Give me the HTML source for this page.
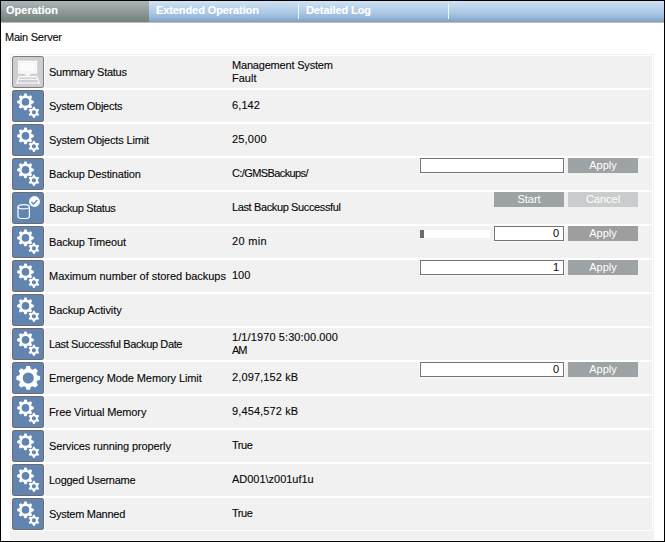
<!DOCTYPE html><html><head><meta charset="utf-8"><style>
*{margin:0;padding:0;box-sizing:border-box}
html,body{width:665px;height:542px;overflow:hidden;background:#fff}
body{position:relative;font-family:"Liberation Sans",sans-serif;font-size:11px;color:#050505}
.a{position:absolute}
.t{position:absolute;white-space:nowrap;line-height:12px;-webkit-text-stroke:0.1px currentColor}
.row{position:absolute;left:12px;width:640px;height:32px;background:#f1f1f1}
.ic{position:absolute;left:12px;width:32px;height:32px}
.ic svg{display:block}
.gap{position:absolute;left:44px;width:1px;height:32px;background:#fbfbfb}
.inp{position:absolute;background:#fff;border:1px solid #747474;height:15px;box-shadow:0 0 0 1px #fafafa}
.btn{position:absolute;height:15px;background:#9da2a4;color:#fff;text-align:center;line-height:15px;font-size:11px}
.num{position:absolute;right:4px;top:0px;line-height:12px}
</style></head><body>
<div class="a" style="left:0;top:0;width:665px;height:542px;border:1px solid #000;z-index:10"></div>
<div class="a" style="left:1px;top:1px;width:663px;height:21px;background:linear-gradient(#d3e5f6 0px,#c5dbef 3px,#aac7e4 12px,#8fb1d3 18px,#7aa0c6 21px)"></div>
<div class="a" style="left:1px;top:1px;width:148px;height:21px;background:linear-gradient(#abb6b8 0px,#a0a9aa 5px,#8c9696 12px,#7a8785 18px,#738180 21px)"></div>
<div class="a" style="left:1px;top:22px;width:663px;height:1px;background:#c4bdb6"></div>
<div class="a" style="left:298px;top:4px;width:1px;height:15px;background:#eef4fb"></div>
<div class="a" style="left:448px;top:4px;width:1px;height:15px;background:#eef4fb"></div>
<div class="t" style="left:6px;top:4px;letter-spacing:0.004px;font-weight:bold;color:#fff;">Operation</div>
<div class="t" style="left:156px;top:4px;letter-spacing:-0.092px;font-weight:bold;color:#fff;">Extended Operation</div>
<div class="t" style="left:306px;top:4px;letter-spacing:-0.094px;font-weight:bold;color:#fff;">Detailed Log</div>
<div class="t" style="left:5px;top:31px;letter-spacing:-0.231px;">Main Server</div>
<div class="a" style="left:10px;top:54px;width:644px;height:478px;border:1px solid #f2f2f2"></div>
<div class="a" style="left:10px;top:531px;width:644px;height:9px;background:#f1f1f1"></div>
<div class="row" style="top:56px"></div>
<div class="gap" style="top:56px"></div>
<div class="ic" style="top:56px"><svg width="32" height="32" viewBox="0 0 32 32"><rect x="0.5" y="0.5" width="31" height="31" rx="1.8" fill="#cfcdd1" stroke="#7d7c7e"/><rect x="6.6" y="5.3" width="18" height="11.8" fill="#fcfcfd" stroke="#fff" stroke-width="1.1"/><rect x="7.7" y="6.5" width="15.8" height="9.5" fill="none" stroke="#e2e1e4" stroke-width="0.5"/><rect x="13.1" y="18" width="4.9" height="1.4" fill="#fff"/><path d="M7.1,20.6H24.7L27.4,27H4.8Z" fill="none" stroke="#fff" stroke-width="1.1"/><path d="M6.1,23.3H25.9" stroke="#fff" stroke-width="0.9"/></svg></div>
<div class="t" style="left:49px;top:66px;letter-spacing:-0.257px;">Summary Status</div>
<div class="t" style="left:232px;top:59px;letter-spacing:-0.188px;">Management System</div>
<div class="t" style="left:232px;top:72px;letter-spacing:0.000px;">Fault</div>
<div class="row" style="top:90px"></div>
<div class="gap" style="top:90px"></div>
<div class="ic" style="top:90px"><svg width="32" height="32" viewBox="0 0 32 32"><rect x="0.5" y="0.5" width="31" height="31" rx="1.8" fill="#6184b1" stroke="#6e6a69"/><path fill="#fff" fill-rule="evenodd" d="M11.44,6.05L12.50,3.56L14.50,3.56L15.56,6.05A6.2,6.2 0 0 1 16.18,6.31L18.69,5.30L20.10,6.71L19.09,9.22A6.2,6.2 0 0 1 19.35,9.84L21.84,10.90L21.84,12.90L19.35,13.96A6.2,6.2 0 0 1 19.09,14.58L20.10,17.09L18.69,18.50L16.18,17.49A6.2,6.2 0 0 1 15.56,17.75L14.50,20.24L12.50,20.24L11.44,17.75A6.2,6.2 0 0 1 10.82,17.49L8.31,18.50L6.90,17.09L7.91,14.58A6.2,6.2 0 0 1 7.65,13.96L5.16,12.90L5.16,10.90L7.65,9.84A6.2,6.2 0 0 1 7.91,9.22L6.90,6.71L8.31,5.30L10.82,6.31A6.2,6.2 0 0 1 11.44,6.05ZM17.30,11.90A3.8,3.8 0 1 0 9.70,11.90A3.8,3.8 0 1 0 17.30,11.90Z"/><path fill="#fff" fill-rule="evenodd" d="M20.08,18.97L21.30,16.63L22.50,16.63L23.72,18.97A3.8,3.8 0 0 1 23.88,19.05L26.51,18.95L27.11,19.98L25.70,22.21A3.8,3.8 0 0 1 25.70,22.39L27.11,24.62L26.51,25.65L23.88,25.55A3.8,3.8 0 0 1 23.72,25.63L22.50,27.97L21.30,27.97L20.08,25.63A3.8,3.8 0 0 1 19.92,25.55L17.29,25.65L16.69,24.62L18.10,22.39A3.8,3.8 0 0 1 18.10,22.21L16.69,19.98L17.29,18.95L19.92,19.05A3.8,3.8 0 0 1 20.08,18.97ZM24.00,22.30A2.1,2.1 0 1 0 19.80,22.30A2.1,2.1 0 1 0 24.00,22.30Z"/></svg></div>
<div class="t" style="left:49px;top:100px;letter-spacing:-0.274px;">System Objects</div>
<div class="t" style="left:232px;top:99px;letter-spacing:0.109px;">6,142</div>
<div class="row" style="top:124px"></div>
<div class="gap" style="top:124px"></div>
<div class="ic" style="top:124px"><svg width="32" height="32" viewBox="0 0 32 32"><rect x="0.5" y="0.5" width="31" height="31" rx="1.8" fill="#6184b1" stroke="#6e6a69"/><path fill="#fff" fill-rule="evenodd" d="M11.44,6.05L12.50,3.56L14.50,3.56L15.56,6.05A6.2,6.2 0 0 1 16.18,6.31L18.69,5.30L20.10,6.71L19.09,9.22A6.2,6.2 0 0 1 19.35,9.84L21.84,10.90L21.84,12.90L19.35,13.96A6.2,6.2 0 0 1 19.09,14.58L20.10,17.09L18.69,18.50L16.18,17.49A6.2,6.2 0 0 1 15.56,17.75L14.50,20.24L12.50,20.24L11.44,17.75A6.2,6.2 0 0 1 10.82,17.49L8.31,18.50L6.90,17.09L7.91,14.58A6.2,6.2 0 0 1 7.65,13.96L5.16,12.90L5.16,10.90L7.65,9.84A6.2,6.2 0 0 1 7.91,9.22L6.90,6.71L8.31,5.30L10.82,6.31A6.2,6.2 0 0 1 11.44,6.05ZM17.30,11.90A3.8,3.8 0 1 0 9.70,11.90A3.8,3.8 0 1 0 17.30,11.90Z"/><path fill="#fff" fill-rule="evenodd" d="M20.08,18.97L21.30,16.63L22.50,16.63L23.72,18.97A3.8,3.8 0 0 1 23.88,19.05L26.51,18.95L27.11,19.98L25.70,22.21A3.8,3.8 0 0 1 25.70,22.39L27.11,24.62L26.51,25.65L23.88,25.55A3.8,3.8 0 0 1 23.72,25.63L22.50,27.97L21.30,27.97L20.08,25.63A3.8,3.8 0 0 1 19.92,25.55L17.29,25.65L16.69,24.62L18.10,22.39A3.8,3.8 0 0 1 18.10,22.21L16.69,19.98L17.29,18.95L19.92,19.05A3.8,3.8 0 0 1 20.08,18.97ZM24.00,22.30A2.1,2.1 0 1 0 19.80,22.30A2.1,2.1 0 1 0 24.00,22.30Z"/></svg></div>
<div class="t" style="left:49px;top:134px;letter-spacing:-0.176px;">System Objects Limit</div>
<div class="t" style="left:232px;top:133px;letter-spacing:0.183px;">25,000</div>
<div class="row" style="top:158px"></div>
<div class="gap" style="top:158px"></div>
<div class="ic" style="top:158px"><svg width="32" height="32" viewBox="0 0 32 32"><rect x="0.5" y="0.5" width="31" height="31" rx="1.8" fill="#6184b1" stroke="#6e6a69"/><path fill="#fff" fill-rule="evenodd" d="M11.44,6.05L12.50,3.56L14.50,3.56L15.56,6.05A6.2,6.2 0 0 1 16.18,6.31L18.69,5.30L20.10,6.71L19.09,9.22A6.2,6.2 0 0 1 19.35,9.84L21.84,10.90L21.84,12.90L19.35,13.96A6.2,6.2 0 0 1 19.09,14.58L20.10,17.09L18.69,18.50L16.18,17.49A6.2,6.2 0 0 1 15.56,17.75L14.50,20.24L12.50,20.24L11.44,17.75A6.2,6.2 0 0 1 10.82,17.49L8.31,18.50L6.90,17.09L7.91,14.58A6.2,6.2 0 0 1 7.65,13.96L5.16,12.90L5.16,10.90L7.65,9.84A6.2,6.2 0 0 1 7.91,9.22L6.90,6.71L8.31,5.30L10.82,6.31A6.2,6.2 0 0 1 11.44,6.05ZM17.30,11.90A3.8,3.8 0 1 0 9.70,11.90A3.8,3.8 0 1 0 17.30,11.90Z"/><path fill="#fff" fill-rule="evenodd" d="M20.08,18.97L21.30,16.63L22.50,16.63L23.72,18.97A3.8,3.8 0 0 1 23.88,19.05L26.51,18.95L27.11,19.98L25.70,22.21A3.8,3.8 0 0 1 25.70,22.39L27.11,24.62L26.51,25.65L23.88,25.55A3.8,3.8 0 0 1 23.72,25.63L22.50,27.97L21.30,27.97L20.08,25.63A3.8,3.8 0 0 1 19.92,25.55L17.29,25.65L16.69,24.62L18.10,22.39A3.8,3.8 0 0 1 18.10,22.21L16.69,19.98L17.29,18.95L19.92,19.05A3.8,3.8 0 0 1 20.08,18.97ZM24.00,22.30A2.1,2.1 0 1 0 19.80,22.30A2.1,2.1 0 1 0 24.00,22.30Z"/></svg></div>
<div class="t" style="left:49px;top:168px;letter-spacing:-0.167px;">Backup Destination</div>
<div class="t" style="left:232px;top:167px;letter-spacing:-0.600px;">C:/GMSBackups/</div>
<div class="inp" style="left:420px;top:158px;width:144px"></div>
<div class="btn" style="left:568px;top:158px;width:70px">Apply</div>
<div class="row" style="top:192px"></div>
<div class="gap" style="top:192px"></div>
<div class="ic" style="top:192px"><svg width="32" height="32" viewBox="0 0 32 32"><rect x="0.5" y="0.5" width="31" height="31" rx="1.8" fill="#6184b1" stroke="#6e6a69"/><path d="M6,14.8V24.4A5.7,2.1 0 0 0 17.4,24.4V14.8" fill="none" stroke="#fff" stroke-width="1.2"/><ellipse cx="11.7" cy="14.8" rx="5.7" ry="2.1" fill="none" stroke="#fff" stroke-width="1.2"/><circle cx="22.5" cy="9.5" r="5.4" fill="#fff"/><path d="M19.4,10L21.5,12L25.4,8" fill="none" stroke="#6184b1" stroke-width="1.3"/></svg></div>
<div class="t" style="left:49px;top:202px;letter-spacing:-0.350px;">Backup Status</div>
<div class="t" style="left:232px;top:201px;letter-spacing:-0.375px;">Last Backup Successful</div>
<div class="btn" style="left:494px;top:192px;width:70px">Start</div>
<div class="btn" style="left:568px;top:192px;width:70px;background:#c9cdcd">Cancel</div>
<div class="row" style="top:226px"></div>
<div class="gap" style="top:226px"></div>
<div class="ic" style="top:226px"><svg width="32" height="32" viewBox="0 0 32 32"><rect x="0.5" y="0.5" width="31" height="31" rx="1.8" fill="#6184b1" stroke="#6e6a69"/><path fill="#fff" fill-rule="evenodd" d="M11.44,6.05L12.50,3.56L14.50,3.56L15.56,6.05A6.2,6.2 0 0 1 16.18,6.31L18.69,5.30L20.10,6.71L19.09,9.22A6.2,6.2 0 0 1 19.35,9.84L21.84,10.90L21.84,12.90L19.35,13.96A6.2,6.2 0 0 1 19.09,14.58L20.10,17.09L18.69,18.50L16.18,17.49A6.2,6.2 0 0 1 15.56,17.75L14.50,20.24L12.50,20.24L11.44,17.75A6.2,6.2 0 0 1 10.82,17.49L8.31,18.50L6.90,17.09L7.91,14.58A6.2,6.2 0 0 1 7.65,13.96L5.16,12.90L5.16,10.90L7.65,9.84A6.2,6.2 0 0 1 7.91,9.22L6.90,6.71L8.31,5.30L10.82,6.31A6.2,6.2 0 0 1 11.44,6.05ZM17.30,11.90A3.8,3.8 0 1 0 9.70,11.90A3.8,3.8 0 1 0 17.30,11.90Z"/><path fill="#fff" fill-rule="evenodd" d="M20.08,18.97L21.30,16.63L22.50,16.63L23.72,18.97A3.8,3.8 0 0 1 23.88,19.05L26.51,18.95L27.11,19.98L25.70,22.21A3.8,3.8 0 0 1 25.70,22.39L27.11,24.62L26.51,25.65L23.88,25.55A3.8,3.8 0 0 1 23.72,25.63L22.50,27.97L21.30,27.97L20.08,25.63A3.8,3.8 0 0 1 19.92,25.55L17.29,25.65L16.69,24.62L18.10,22.39A3.8,3.8 0 0 1 18.10,22.21L16.69,19.98L17.29,18.95L19.92,19.05A3.8,3.8 0 0 1 20.08,18.97ZM24.00,22.30A2.1,2.1 0 1 0 19.80,22.30A2.1,2.1 0 1 0 24.00,22.30Z"/></svg></div>
<div class="t" style="left:49px;top:236px;letter-spacing:-0.148px;">Backup Timeout</div>
<div class="t" style="left:232px;top:235px;letter-spacing:0.314px;">20 min</div>
<div class="a" style="left:420px;top:230px;width:70px;height:8px;background:#fff"></div>
<div class="a" style="left:420px;top:230px;width:4px;height:8px;background:#6b6b6b"></div>
<div class="inp" style="left:494px;top:226px;width:70px"><span class="num">0</span></div>
<div class="btn" style="left:568px;top:226px;width:70px;background:#9e9e9e">Apply</div>
<div class="row" style="top:260px"></div>
<div class="gap" style="top:260px"></div>
<div class="ic" style="top:260px"><svg width="32" height="32" viewBox="0 0 32 32"><rect x="0.5" y="0.5" width="31" height="31" rx="1.8" fill="#6184b1" stroke="#6e6a69"/><path fill="#fff" fill-rule="evenodd" d="M11.44,6.05L12.50,3.56L14.50,3.56L15.56,6.05A6.2,6.2 0 0 1 16.18,6.31L18.69,5.30L20.10,6.71L19.09,9.22A6.2,6.2 0 0 1 19.35,9.84L21.84,10.90L21.84,12.90L19.35,13.96A6.2,6.2 0 0 1 19.09,14.58L20.10,17.09L18.69,18.50L16.18,17.49A6.2,6.2 0 0 1 15.56,17.75L14.50,20.24L12.50,20.24L11.44,17.75A6.2,6.2 0 0 1 10.82,17.49L8.31,18.50L6.90,17.09L7.91,14.58A6.2,6.2 0 0 1 7.65,13.96L5.16,12.90L5.16,10.90L7.65,9.84A6.2,6.2 0 0 1 7.91,9.22L6.90,6.71L8.31,5.30L10.82,6.31A6.2,6.2 0 0 1 11.44,6.05ZM17.30,11.90A3.8,3.8 0 1 0 9.70,11.90A3.8,3.8 0 1 0 17.30,11.90Z"/><path fill="#fff" fill-rule="evenodd" d="M20.08,18.97L21.30,16.63L22.50,16.63L23.72,18.97A3.8,3.8 0 0 1 23.88,19.05L26.51,18.95L27.11,19.98L25.70,22.21A3.8,3.8 0 0 1 25.70,22.39L27.11,24.62L26.51,25.65L23.88,25.55A3.8,3.8 0 0 1 23.72,25.63L22.50,27.97L21.30,27.97L20.08,25.63A3.8,3.8 0 0 1 19.92,25.55L17.29,25.65L16.69,24.62L18.10,22.39A3.8,3.8 0 0 1 18.10,22.21L16.69,19.98L17.29,18.95L19.92,19.05A3.8,3.8 0 0 1 20.08,18.97ZM24.00,22.30A2.1,2.1 0 1 0 19.80,22.30A2.1,2.1 0 1 0 24.00,22.30Z"/></svg></div>
<div class="t" style="left:49px;top:270px;letter-spacing:-0.032px;">Maximum number of stored backups</div>
<div class="t" style="left:232px;top:269px;letter-spacing:-0.037px;">100</div>
<div class="inp" style="left:420px;top:260px;width:144px"><span class="num">1</span></div>
<div class="btn" style="left:568px;top:260px;width:70px">Apply</div>
<div class="row" style="top:294px"></div>
<div class="gap" style="top:294px"></div>
<div class="ic" style="top:294px"><svg width="32" height="32" viewBox="0 0 32 32"><rect x="0.5" y="0.5" width="31" height="31" rx="1.8" fill="#6184b1" stroke="#6e6a69"/><path fill="#fff" fill-rule="evenodd" d="M11.44,6.05L12.50,3.56L14.50,3.56L15.56,6.05A6.2,6.2 0 0 1 16.18,6.31L18.69,5.30L20.10,6.71L19.09,9.22A6.2,6.2 0 0 1 19.35,9.84L21.84,10.90L21.84,12.90L19.35,13.96A6.2,6.2 0 0 1 19.09,14.58L20.10,17.09L18.69,18.50L16.18,17.49A6.2,6.2 0 0 1 15.56,17.75L14.50,20.24L12.50,20.24L11.44,17.75A6.2,6.2 0 0 1 10.82,17.49L8.31,18.50L6.90,17.09L7.91,14.58A6.2,6.2 0 0 1 7.65,13.96L5.16,12.90L5.16,10.90L7.65,9.84A6.2,6.2 0 0 1 7.91,9.22L6.90,6.71L8.31,5.30L10.82,6.31A6.2,6.2 0 0 1 11.44,6.05ZM17.30,11.90A3.8,3.8 0 1 0 9.70,11.90A3.8,3.8 0 1 0 17.30,11.90Z"/><path fill="#fff" fill-rule="evenodd" d="M20.08,18.97L21.30,16.63L22.50,16.63L23.72,18.97A3.8,3.8 0 0 1 23.88,19.05L26.51,18.95L27.11,19.98L25.70,22.21A3.8,3.8 0 0 1 25.70,22.39L27.11,24.62L26.51,25.65L23.88,25.55A3.8,3.8 0 0 1 23.72,25.63L22.50,27.97L21.30,27.97L20.08,25.63A3.8,3.8 0 0 1 19.92,25.55L17.29,25.65L16.69,24.62L18.10,22.39A3.8,3.8 0 0 1 18.10,22.21L16.69,19.98L17.29,18.95L19.92,19.05A3.8,3.8 0 0 1 20.08,18.97ZM24.00,22.30A2.1,2.1 0 1 0 19.80,22.30A2.1,2.1 0 1 0 24.00,22.30Z"/></svg></div>
<div class="t" style="left:49px;top:304px;letter-spacing:-0.094px;">Backup Activity</div>
<div class="row" style="top:328px"></div>
<div class="gap" style="top:328px"></div>
<div class="ic" style="top:328px"><svg width="32" height="32" viewBox="0 0 32 32"><rect x="0.5" y="0.5" width="31" height="31" rx="1.8" fill="#6184b1" stroke="#6e6a69"/><path fill="#fff" fill-rule="evenodd" d="M11.44,6.05L12.50,3.56L14.50,3.56L15.56,6.05A6.2,6.2 0 0 1 16.18,6.31L18.69,5.30L20.10,6.71L19.09,9.22A6.2,6.2 0 0 1 19.35,9.84L21.84,10.90L21.84,12.90L19.35,13.96A6.2,6.2 0 0 1 19.09,14.58L20.10,17.09L18.69,18.50L16.18,17.49A6.2,6.2 0 0 1 15.56,17.75L14.50,20.24L12.50,20.24L11.44,17.75A6.2,6.2 0 0 1 10.82,17.49L8.31,18.50L6.90,17.09L7.91,14.58A6.2,6.2 0 0 1 7.65,13.96L5.16,12.90L5.16,10.90L7.65,9.84A6.2,6.2 0 0 1 7.91,9.22L6.90,6.71L8.31,5.30L10.82,6.31A6.2,6.2 0 0 1 11.44,6.05ZM17.30,11.90A3.8,3.8 0 1 0 9.70,11.90A3.8,3.8 0 1 0 17.30,11.90Z"/><path fill="#fff" fill-rule="evenodd" d="M20.08,18.97L21.30,16.63L22.50,16.63L23.72,18.97A3.8,3.8 0 0 1 23.88,19.05L26.51,18.95L27.11,19.98L25.70,22.21A3.8,3.8 0 0 1 25.70,22.39L27.11,24.62L26.51,25.65L23.88,25.55A3.8,3.8 0 0 1 23.72,25.63L22.50,27.97L21.30,27.97L20.08,25.63A3.8,3.8 0 0 1 19.92,25.55L17.29,25.65L16.69,24.62L18.10,22.39A3.8,3.8 0 0 1 18.10,22.21L16.69,19.98L17.29,18.95L19.92,19.05A3.8,3.8 0 0 1 20.08,18.97ZM24.00,22.30A2.1,2.1 0 1 0 19.80,22.30A2.1,2.1 0 1 0 24.00,22.30Z"/></svg></div>
<div class="t" style="left:49px;top:338px;letter-spacing:-0.369px;">Last Successful Backup Date</div>
<div class="t" style="left:232px;top:331px;letter-spacing:0.099px;">1/1/1970 5:30:00.000</div>
<div class="t" style="left:232px;top:344px;letter-spacing:-1.100px;">AM</div>
<div class="row" style="top:362px"></div>
<div class="gap" style="top:362px"></div>
<div class="ic" style="top:362px"><svg width="32" height="32" viewBox="0 0 32 32"><rect x="0.5" y="0.5" width="31" height="31" rx="1.8" fill="#6184b1" stroke="#6e6a69"/><path fill="#fff" fill-rule="evenodd" d="M13.49,7.07L14.56,4.07L17.94,4.07L19.01,7.07A9.3,9.3 0 0 1 20.58,7.72L23.45,6.35L25.85,8.75L24.48,11.62A9.3,9.3 0 0 1 25.13,13.19L28.13,14.26L28.13,17.64L25.13,18.71A9.3,9.3 0 0 1 24.48,20.28L25.85,23.15L23.45,25.55L20.58,24.18A9.3,9.3 0 0 1 19.01,24.83L17.94,27.83L14.56,27.83L13.49,24.83A9.3,9.3 0 0 1 11.92,24.18L9.05,25.55L6.65,23.15L8.02,20.28A9.3,9.3 0 0 1 7.37,18.71L4.37,17.64L4.37,14.26L7.37,13.19A9.3,9.3 0 0 1 8.02,11.62L6.65,8.75L9.05,6.35L11.92,7.72A9.3,9.3 0 0 1 13.49,7.07ZM21.80,15.95A5.55,5.55 0 1 0 10.70,15.95A5.55,5.55 0 1 0 21.80,15.95Z"/></svg></div>
<div class="t" style="left:49px;top:372px;letter-spacing:-0.097px;">Emergency Mode Memory Limit</div>
<div class="t" style="left:232px;top:371px;letter-spacing:0.118px;">2,097,152 kB</div>
<div class="inp" style="left:420px;top:362px;width:144px"><span class="num">0</span></div>
<div class="btn" style="left:568px;top:362px;width:70px">Apply</div>
<div class="row" style="top:396px"></div>
<div class="gap" style="top:396px"></div>
<div class="ic" style="top:396px"><svg width="32" height="32" viewBox="0 0 32 32"><rect x="0.5" y="0.5" width="31" height="31" rx="1.8" fill="#6184b1" stroke="#6e6a69"/><path fill="#fff" fill-rule="evenodd" d="M11.44,6.05L12.50,3.56L14.50,3.56L15.56,6.05A6.2,6.2 0 0 1 16.18,6.31L18.69,5.30L20.10,6.71L19.09,9.22A6.2,6.2 0 0 1 19.35,9.84L21.84,10.90L21.84,12.90L19.35,13.96A6.2,6.2 0 0 1 19.09,14.58L20.10,17.09L18.69,18.50L16.18,17.49A6.2,6.2 0 0 1 15.56,17.75L14.50,20.24L12.50,20.24L11.44,17.75A6.2,6.2 0 0 1 10.82,17.49L8.31,18.50L6.90,17.09L7.91,14.58A6.2,6.2 0 0 1 7.65,13.96L5.16,12.90L5.16,10.90L7.65,9.84A6.2,6.2 0 0 1 7.91,9.22L6.90,6.71L8.31,5.30L10.82,6.31A6.2,6.2 0 0 1 11.44,6.05ZM17.30,11.90A3.8,3.8 0 1 0 9.70,11.90A3.8,3.8 0 1 0 17.30,11.90Z"/><path fill="#fff" fill-rule="evenodd" d="M20.08,18.97L21.30,16.63L22.50,16.63L23.72,18.97A3.8,3.8 0 0 1 23.88,19.05L26.51,18.95L27.11,19.98L25.70,22.21A3.8,3.8 0 0 1 25.70,22.39L27.11,24.62L26.51,25.65L23.88,25.55A3.8,3.8 0 0 1 23.72,25.63L22.50,27.97L21.30,27.97L20.08,25.63A3.8,3.8 0 0 1 19.92,25.55L17.29,25.65L16.69,24.62L18.10,22.39A3.8,3.8 0 0 1 18.10,22.21L16.69,19.98L17.29,18.95L19.92,19.05A3.8,3.8 0 0 1 20.08,18.97ZM24.00,22.30A2.1,2.1 0 1 0 19.80,22.30A2.1,2.1 0 1 0 24.00,22.30Z"/></svg></div>
<div class="t" style="left:49px;top:406px;letter-spacing:-0.114px;">Free Virtual Memory</div>
<div class="t" style="left:232px;top:405px;letter-spacing:0.118px;">9,454,572 kB</div>
<div class="row" style="top:430px"></div>
<div class="gap" style="top:430px"></div>
<div class="ic" style="top:430px"><svg width="32" height="32" viewBox="0 0 32 32"><rect x="0.5" y="0.5" width="31" height="31" rx="1.8" fill="#6184b1" stroke="#6e6a69"/><path fill="#fff" fill-rule="evenodd" d="M11.44,6.05L12.50,3.56L14.50,3.56L15.56,6.05A6.2,6.2 0 0 1 16.18,6.31L18.69,5.30L20.10,6.71L19.09,9.22A6.2,6.2 0 0 1 19.35,9.84L21.84,10.90L21.84,12.90L19.35,13.96A6.2,6.2 0 0 1 19.09,14.58L20.10,17.09L18.69,18.50L16.18,17.49A6.2,6.2 0 0 1 15.56,17.75L14.50,20.24L12.50,20.24L11.44,17.75A6.2,6.2 0 0 1 10.82,17.49L8.31,18.50L6.90,17.09L7.91,14.58A6.2,6.2 0 0 1 7.65,13.96L5.16,12.90L5.16,10.90L7.65,9.84A6.2,6.2 0 0 1 7.91,9.22L6.90,6.71L8.31,5.30L10.82,6.31A6.2,6.2 0 0 1 11.44,6.05ZM17.30,11.90A3.8,3.8 0 1 0 9.70,11.90A3.8,3.8 0 1 0 17.30,11.90Z"/><path fill="#fff" fill-rule="evenodd" d="M20.08,18.97L21.30,16.63L22.50,16.63L23.72,18.97A3.8,3.8 0 0 1 23.88,19.05L26.51,18.95L27.11,19.98L25.70,22.21A3.8,3.8 0 0 1 25.70,22.39L27.11,24.62L26.51,25.65L23.88,25.55A3.8,3.8 0 0 1 23.72,25.63L22.50,27.97L21.30,27.97L20.08,25.63A3.8,3.8 0 0 1 19.92,25.55L17.29,25.65L16.69,24.62L18.10,22.39A3.8,3.8 0 0 1 18.10,22.21L16.69,19.98L17.29,18.95L19.92,19.05A3.8,3.8 0 0 1 20.08,18.97ZM24.00,22.30A2.1,2.1 0 1 0 19.80,22.30A2.1,2.1 0 1 0 24.00,22.30Z"/></svg></div>
<div class="t" style="left:49px;top:440px;letter-spacing:-0.116px;">Services running properly</div>
<div class="t" style="left:232px;top:439px;letter-spacing:-0.440px;">True</div>
<div class="row" style="top:464px"></div>
<div class="gap" style="top:464px"></div>
<div class="ic" style="top:464px"><svg width="32" height="32" viewBox="0 0 32 32"><rect x="0.5" y="0.5" width="31" height="31" rx="1.8" fill="#6184b1" stroke="#6e6a69"/><path fill="#fff" fill-rule="evenodd" d="M11.44,6.05L12.50,3.56L14.50,3.56L15.56,6.05A6.2,6.2 0 0 1 16.18,6.31L18.69,5.30L20.10,6.71L19.09,9.22A6.2,6.2 0 0 1 19.35,9.84L21.84,10.90L21.84,12.90L19.35,13.96A6.2,6.2 0 0 1 19.09,14.58L20.10,17.09L18.69,18.50L16.18,17.49A6.2,6.2 0 0 1 15.56,17.75L14.50,20.24L12.50,20.24L11.44,17.75A6.2,6.2 0 0 1 10.82,17.49L8.31,18.50L6.90,17.09L7.91,14.58A6.2,6.2 0 0 1 7.65,13.96L5.16,12.90L5.16,10.90L7.65,9.84A6.2,6.2 0 0 1 7.91,9.22L6.90,6.71L8.31,5.30L10.82,6.31A6.2,6.2 0 0 1 11.44,6.05ZM17.30,11.90A3.8,3.8 0 1 0 9.70,11.90A3.8,3.8 0 1 0 17.30,11.90Z"/><path fill="#fff" fill-rule="evenodd" d="M20.08,18.97L21.30,16.63L22.50,16.63L23.72,18.97A3.8,3.8 0 0 1 23.88,19.05L26.51,18.95L27.11,19.98L25.70,22.21A3.8,3.8 0 0 1 25.70,22.39L27.11,24.62L26.51,25.65L23.88,25.55A3.8,3.8 0 0 1 23.72,25.63L22.50,27.97L21.30,27.97L20.08,25.63A3.8,3.8 0 0 1 19.92,25.55L17.29,25.65L16.69,24.62L18.10,22.39A3.8,3.8 0 0 1 18.10,22.21L16.69,19.98L17.29,18.95L19.92,19.05A3.8,3.8 0 0 1 20.08,18.97ZM24.00,22.30A2.1,2.1 0 1 0 19.80,22.30A2.1,2.1 0 1 0 24.00,22.30Z"/></svg></div>
<div class="t" style="left:49px;top:474px;letter-spacing:-0.283px;">Logged Username</div>
<div class="t" style="left:232px;top:473px;letter-spacing:-0.018px;">AD001\z001uf1u</div>
<div class="row" style="top:498px"></div>
<div class="gap" style="top:498px"></div>
<div class="ic" style="top:498px"><svg width="32" height="32" viewBox="0 0 32 32"><rect x="0.5" y="0.5" width="31" height="31" rx="1.8" fill="#6184b1" stroke="#6e6a69"/><path fill="#fff" fill-rule="evenodd" d="M11.44,6.05L12.50,3.56L14.50,3.56L15.56,6.05A6.2,6.2 0 0 1 16.18,6.31L18.69,5.30L20.10,6.71L19.09,9.22A6.2,6.2 0 0 1 19.35,9.84L21.84,10.90L21.84,12.90L19.35,13.96A6.2,6.2 0 0 1 19.09,14.58L20.10,17.09L18.69,18.50L16.18,17.49A6.2,6.2 0 0 1 15.56,17.75L14.50,20.24L12.50,20.24L11.44,17.75A6.2,6.2 0 0 1 10.82,17.49L8.31,18.50L6.90,17.09L7.91,14.58A6.2,6.2 0 0 1 7.65,13.96L5.16,12.90L5.16,10.90L7.65,9.84A6.2,6.2 0 0 1 7.91,9.22L6.90,6.71L8.31,5.30L10.82,6.31A6.2,6.2 0 0 1 11.44,6.05ZM17.30,11.90A3.8,3.8 0 1 0 9.70,11.90A3.8,3.8 0 1 0 17.30,11.90Z"/><path fill="#fff" fill-rule="evenodd" d="M20.08,18.97L21.30,16.63L22.50,16.63L23.72,18.97A3.8,3.8 0 0 1 23.88,19.05L26.51,18.95L27.11,19.98L25.70,22.21A3.8,3.8 0 0 1 25.70,22.39L27.11,24.62L26.51,25.65L23.88,25.55A3.8,3.8 0 0 1 23.72,25.63L22.50,27.97L21.30,27.97L20.08,25.63A3.8,3.8 0 0 1 19.92,25.55L17.29,25.65L16.69,24.62L18.10,22.39A3.8,3.8 0 0 1 18.10,22.21L16.69,19.98L17.29,18.95L19.92,19.05A3.8,3.8 0 0 1 20.08,18.97ZM24.00,22.30A2.1,2.1 0 1 0 19.80,22.30A2.1,2.1 0 1 0 24.00,22.30Z"/></svg></div>
<div class="t" style="left:49px;top:508px;letter-spacing:-0.269px;">System Manned</div>
<div class="t" style="left:232px;top:507px;letter-spacing:-0.440px;">True</div>
</body></html>
